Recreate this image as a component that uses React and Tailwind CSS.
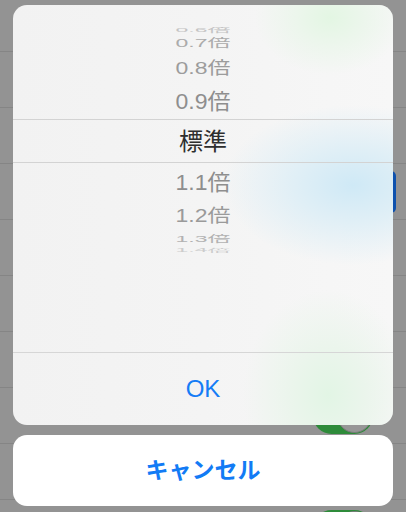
export default function App() {
  const jp = { fontFamily: '"Liberation Sans", "Noto Sans CJK JP", sans-serif' };
  return (
    <div className="relative w-[406px] h-[512px] overflow-hidden bg-[#939393]" style={jp}>
      {/* dimmed background settings list */}
      <div className="flex flex-col">
        <div className="h-[52px] border-b border-[#858585]" />
        <div className="h-14 border-b border-[#858585]" />
        <div className="h-14 border-b border-[#858585]" />
        <div className="h-14 border-b border-[#858585] flex items-center justify-end pr-[10px]">
          <div className="w-[60px] h-[42px] rounded-[5px] bg-[#0d51ae]" />
        </div>
        <div className="h-14 border-b border-[#858585]" />
        <div className="h-14 border-b border-[#858585]" />
        <div className="h-14 border-b border-[#858585]" />
        <div className="h-14 border-b border-[#858585] flex items-center justify-end pr-[33px]">
          <div className="relative w-[60px] h-[37px] rounded-full bg-[#2e8b3a]">
            <div className="absolute right-[1px] top-[1px] w-[35px] h-[35px] rounded-full bg-[#979797] border border-[#7a7a7a]" />
          </div>
        </div>
        <div className="h-14 border-b border-[#858585]" />
        <div className="h-14 flex items-center justify-end pr-[33px]">
          <div className="relative w-[60px] h-[37px] rounded-full bg-[#2e8b3a]">
            <div className="absolute right-[1px] top-[1px] w-[35px] h-[35px] rounded-full bg-[#979797] border border-[#7a7a7a]" />
          </div>
        </div>
      </div>

      {/* action sheet */}
      <div className="absolute top-[5px] left-[13px] w-[380px] flex flex-col gap-[10px]">
        <div className="relative h-[420px] rounded-[14px] bg-[linear-gradient(90deg,#f2f2f2,#f4f4f4_50%,#f7f7f7)] overflow-hidden flex flex-col">
          {/* tints */}
          <div className="absolute -top-[45px] -right-[12px] w-[150px] h-[115px] bg-[radial-gradient(closest-side,#e3f6e3,#ecf6ec_45%,transparent)]" />
          <div className="absolute top-[100px] -right-[90px] w-[260px] h-[160px] bg-[radial-gradient(closest-side,#cfe9f6,#e0eff6_45%,transparent)]" />
          <div className="absolute top-[285px] -right-[20px] w-[170px] h-[210px] bg-[radial-gradient(closest-side,#e2f5e5,#ebf5ec_45%,transparent)]" />

          <div className="relative h-[347px] pt-[20px] flex flex-col">
            <div className="h-[10px] flex items-center justify-center overflow-hidden">
              <span className="text-[23px] leading-none text-[#c4c4c4] scale-y-[0.25]">0.6倍</span>
            </div>
            <div className="h-[16px] flex items-center justify-center">
              <span className="text-[23px] leading-none text-[#ababab] scale-y-[0.5]">0.7倍</span>
            </div>
            <div className="h-[34px] flex items-center justify-center">
              <span className="text-[23px] leading-none text-[#9c9c9c] scale-y-[0.73]">0.8倍</span>
            </div>
            <div className="h-[34px] flex items-center justify-center">
              <span className="text-[23px] leading-none text-[#8e8e8e] scale-y-[0.92]">0.9倍</span>
            </div>
            <div className="h-[44px] border-y border-[#d3d3d3] flex items-center justify-center">
              <span className="text-[24px] leading-none text-[#2e2e2e] translate-y-[1px]">標準</span>
            </div>
            <div className="h-[38px] flex items-center justify-center">
              <span className="text-[23px] leading-none text-[#8e8e8e] scale-y-[0.95]">1.1倍</span>
            </div>
            <div className="h-[30px] flex items-center justify-center">
              <span className="text-[23px] leading-none text-[#9a9a9a] scale-y-[0.77]">1.2倍</span>
            </div>
            <div className="h-[16px] flex items-center justify-center">
              <span className="text-[23px] leading-none text-[#b2b2b2] scale-y-[0.4]">1.3倍</span>
            </div>
            <div className="h-[6px] flex items-center justify-center overflow-hidden">
              <span className="text-[23px] leading-none text-[#cccccc] scale-y-[0.2]">1.4倍</span>
            </div>
          </div>
          <div className="relative flex-1 border-t border-[#d6d6d6] flex items-center justify-center">
            <span className="text-[24px] text-[#157cf6]">OK</span>
          </div>
        </div>
        <div className="h-[71px] rounded-[14px] bg-white flex items-center justify-center">
          <span className="text-[23px] font-bold text-[#127bf5]">キャンセル</span>
        </div>
      </div>
    </div>
  );
}
